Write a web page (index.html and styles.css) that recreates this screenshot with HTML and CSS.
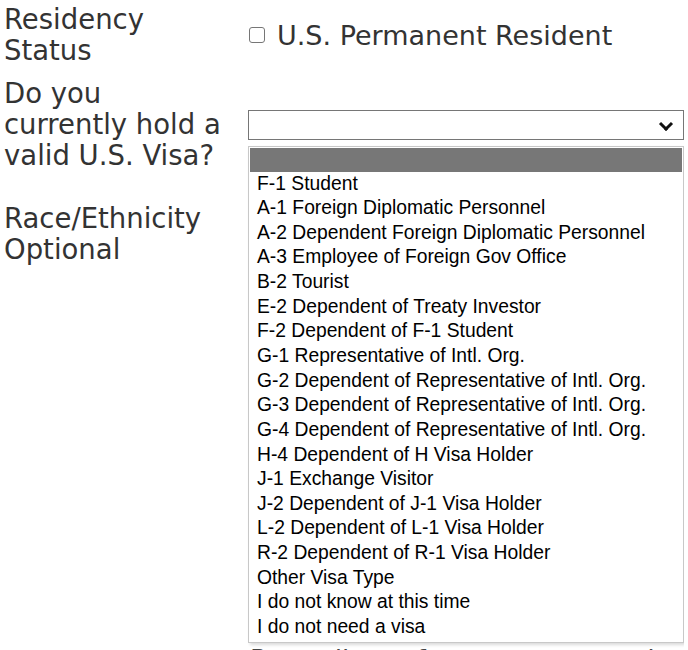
FILE: index.html
```html
<!DOCTYPE html>
<html lang="en">
<head>
  <meta charset="UTF-8">
  <title>Application • Personal Details</title>
  <link rel="stylesheet" href="styles.css">
</head>
<body>

  <form class="app-form">

    <div class="form-row">
      <div class="label">Residency<br>Status</div>
      <div class="field">
        <label class="check"><span class="box"></span>U.S. Permanent Resident</label>
      </div>
    </div>

    <div class="form-row">
      <div class="label">Do you<br>currently hold a<br>valid U.S. Visa?</div>
      <div class="field select-wrap">
        <div class="select"><span class="chevron"></span></div>

        <ul class="options">
          <li class="selected"></li>
          <li>F-1 Student</li>
          <li>A-1 Foreign Diplomatic Personnel</li>
          <li>A-2 Dependent Foreign Diplomatic Personnel</li>
          <li>A-3 Employee of Foreign Gov Office</li>
          <li>B-2 Tourist</li>
          <li>E-2 Dependent of Treaty Investor</li>
          <li>F-2 Dependent of F-1 Student</li>
          <li>G-1 Representative of Intl. Org.</li>
          <li>G-2 Dependent of Representative of Intl. Org.</li>
          <li>G-3 Dependent of Representative of Intl. Org.</li>
          <li>G-4 Dependent of Representative of Intl. Org.</li>
          <li>H-4 Dependent of H Visa Holder</li>
          <li>J-1 Exchange Visitor</li>
          <li>J-2 Dependent of J-1 Visa Holder</li>
          <li>L-2 Dependent of L-1 Visa Holder</li>
          <li>R-2 Dependent of R-1 Visa Holder</li>
          <li>Other Visa Type</li>
          <li>I do not know at this time</li>
          <li>I do not need a visa</li>
        </ul>
      </div>
    </div>

    <div class="form-row race">
      <div class="label">Race/Ethnicity<br>Optional</div>
      <div class="field race-field">
        <ul class="race-list">
          <li>Please tell us how you identify (select all that apply)</li>
          <li><a href="#">Learn more about why we ask this question</a></li>
          <li><a href="#">Read our privacy statement before answering</a></li>
          <li>Each of the categories below is defined by the federal government</li>
          <li>&nbsp;</li>
          <li>White</li>
          <li>Asian</li>
          <li>Black or African American</li>
          <li>Hispanic or Latino</li>
          <li>American Indian or Alaska Native</li>
          <li>Native Hawaiian or Other Pacific Islander</li>
          <li>Two or more races</li>
          <li>I prefer not to answer</li>
        </ul>
        <p class="note">Regardless of your answer to the question above, your application will be reviewed the same way.</p>
      </div>
    </div>

  </form>

</body>
</html>
```

FILE: styles.css
```css
body {
  margin: 0;
  padding: 0 4px;
  font-family: 'DejaVu Sans', sans-serif;
  color: #333;
  background: white;
}
.app-form {
  display: flex;
  flex-direction: column;
  height: 650px;
  overflow: hidden;
}
.form-row {
  display: grid;
  grid-template-columns: 244px 436px;
  align-items: center;
  margin-top: 4px;
}
.form-row + .form-row {
  margin-top: 12px;
}
.form-row.race {
  margin-top: 32px;
  align-items: start;
}
.label {
  font-size: 27.5px;
  line-height: 31px;
  white-space: nowrap;
}

/* checkbox */
.check {
  display: flex;
  align-items: center;
  gap: 12px;
  font-size: 27px;
  line-height: 31px;
}
.check .box {
  width: 14px;
  height: 14px;
  margin-left: 1px;
  border: 1px solid #767676;
  border-radius: 3px;
  background: white;
}

/* select + open list */
.select-wrap {
  position: relative;
}
.select {
  height: 28px;
  border: 1px solid #767676;
  background: white;
  position: relative;
}
.chevron {
  position: absolute;
  right: 12px;
  top: 8px;
  width: 7px;
  height: 7px;
  border-right: 3px solid #111;
  border-bottom: 3px solid #111;
  transform: rotate(45deg);
}
.options {
  position: absolute;
  top: 36px;
  left: 0;
  width: 434px;
  margin: 0;
  padding: 1px 0 2px;
  list-style: none;
  background: white;
  border: 1px solid #c8c8c8;
  box-shadow: 2px 2px 3px rgba(0, 0, 0, 0.15);
  font-family: 'Liberation Sans', Arial, sans-serif;
  font-size: 19.3px;
  color: #000;
  z-index: 2;
}
.options li {
  height: 24.65px;
  line-height: 24.65px;
  padding-left: 8px;
  white-space: nowrap;
}
.options li.selected {
  height: 24px;
  margin: 0 1px;
  background: #777;
}

/* content sitting under the open list */
.race-field {
  color: #444;
  font-size: 26px;
  line-height: 31px;
}
.race-list {
  list-style: none;
  margin: 0 0 39px;
  padding: 0 0 0 8px;
  white-space: nowrap;
}
.race-list a {
  color: #1a5aa6;
  text-decoration: none;
}
.note {
  margin: 0;
  padding-left: 2px;
  white-space: nowrap;
}
```
